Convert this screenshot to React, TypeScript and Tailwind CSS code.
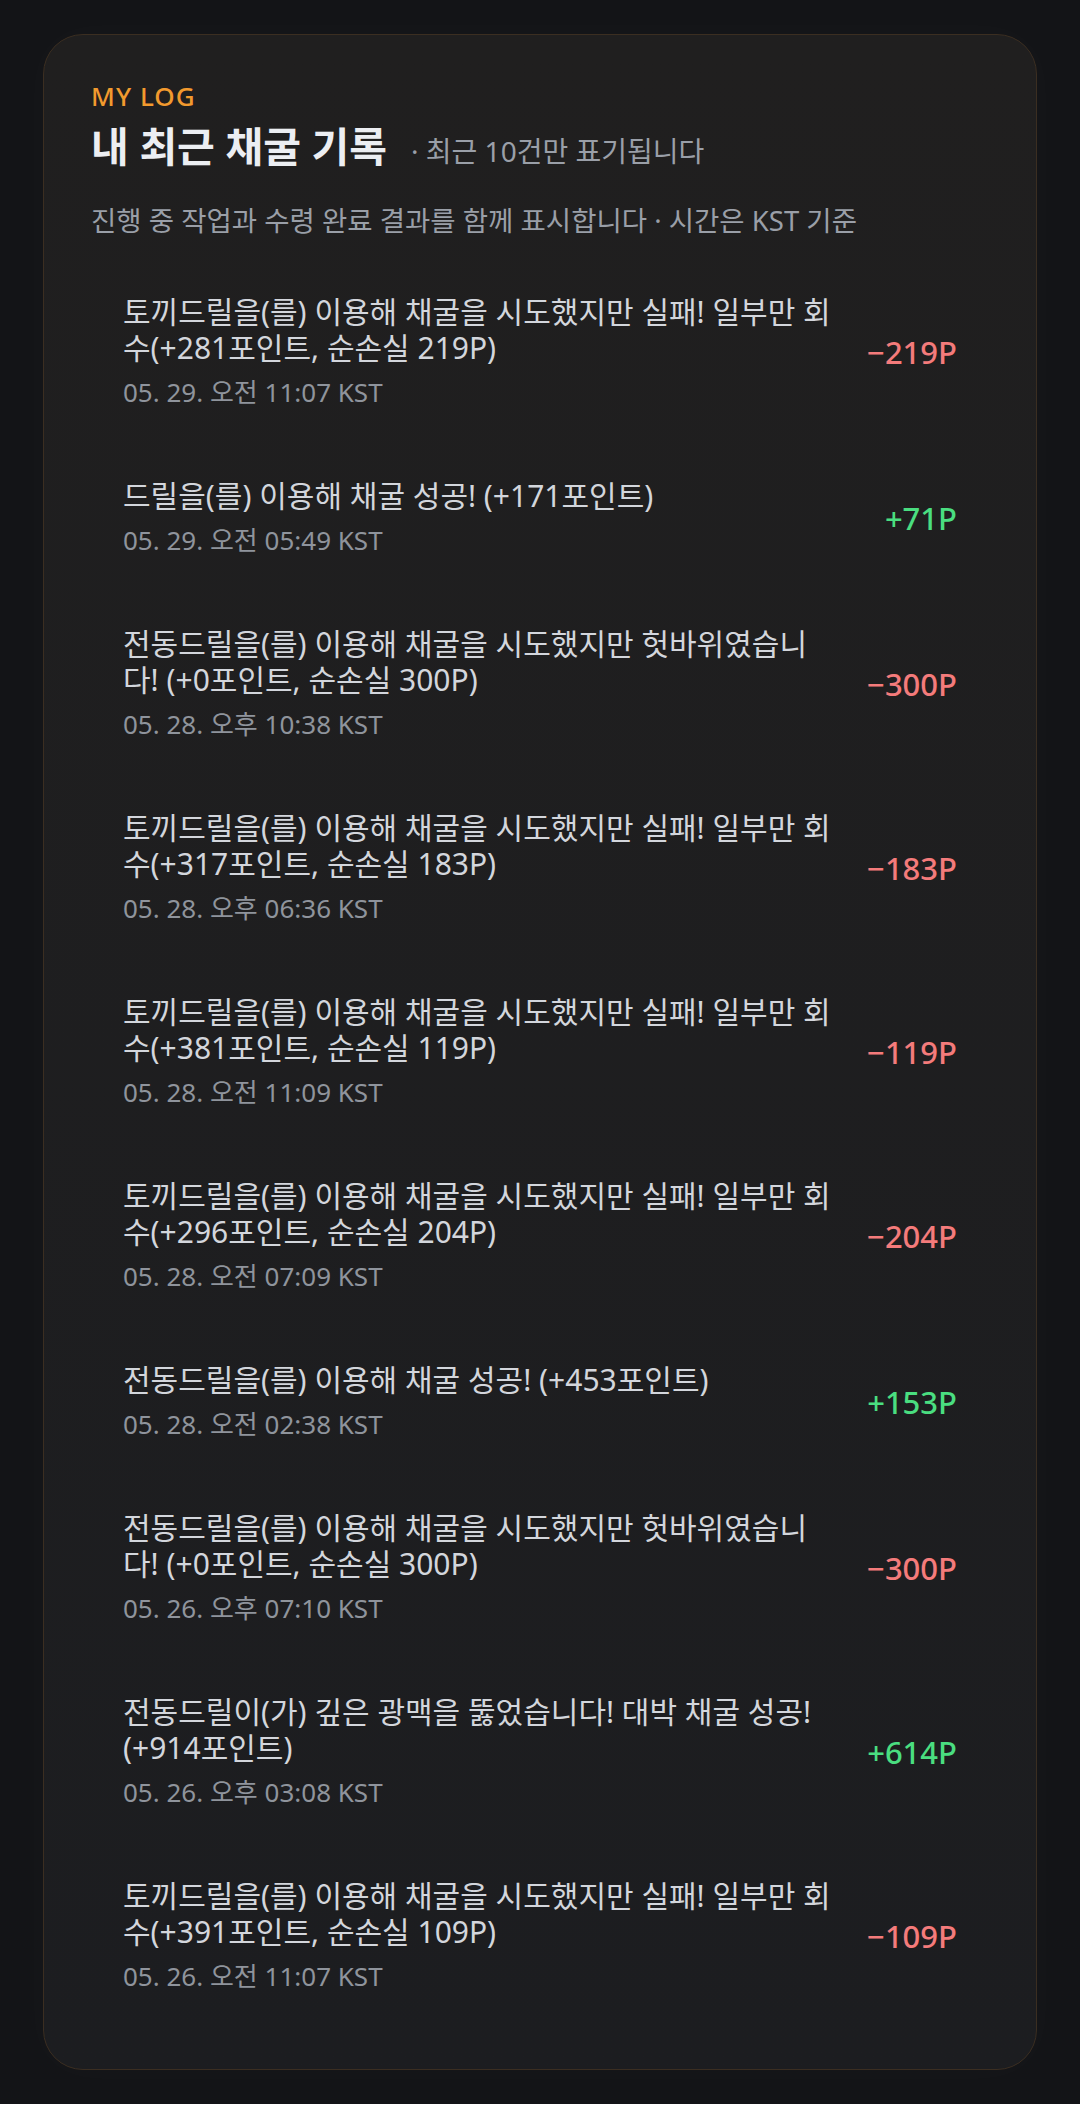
import React from "react";

interface LogEntry {
  message: string;
  time: string;
  delta: number;
}

const entries: LogEntry[] = [
  { message: "토끼드릴을(를) 이용해 채굴을 시도했지만 실패! 일부만 회수(+281포인트, 순손실 219P)", time: "05. 29. 오전 11:07 KST", delta: -219 },
  { message: "드릴을(를) 이용해 채굴 성공! (+171포인트)", time: "05. 29. 오전 05:49 KST", delta: 71 },
  { message: "전동드릴을(를) 이용해 채굴을 시도했지만 헛바위였습니다! (+0포인트, 순손실 300P)", time: "05. 28. 오후 10:38 KST", delta: -300 },
  { message: "토끼드릴을(를) 이용해 채굴을 시도했지만 실패! 일부만 회수(+317포인트, 순손실 183P)", time: "05. 28. 오후 06:36 KST", delta: -183 },
  { message: "토끼드릴을(를) 이용해 채굴을 시도했지만 실패! 일부만 회수(+381포인트, 순손실 119P)", time: "05. 28. 오전 11:09 KST", delta: -119 },
  { message: "토끼드릴을(를) 이용해 채굴을 시도했지만 실패! 일부만 회수(+296포인트, 순손실 204P)", time: "05. 28. 오전 07:09 KST", delta: -204 },
  { message: "전동드릴을(를) 이용해 채굴 성공! (+453포인트)", time: "05. 28. 오전 02:38 KST", delta: 153 },
  { message: "전동드릴을(를) 이용해 채굴을 시도했지만 헛바위였습니다! (+0포인트, 순손실 300P)", time: "05. 26. 오후 07:10 KST", delta: -300 },
  { message: "전동드릴이(가) 깊은 광맥을 뚫었습니다! 대박 채굴 성공! (+914포인트)", time: "05. 26. 오후 03:08 KST", delta: 614 },
  { message: "토끼드릴을(를) 이용해 채굴을 시도했지만 실패! 일부만 회수(+391포인트, 순손실 109P)", time: "05. 26. 오전 11:07 KST", delta: -109 },
];

const LogRow = ({ entry }: { entry: LogEntry }) => {
  const positive = entry.delta > 0;
  return (
    <li className="flex items-center gap-[30px] px-8 py-7">
      <div className="flex-1 min-w-0">
        <p className="text-[30px] leading-[36px] text-[#d3d6dc]">{entry.message}</p>
        <p className="mt-2 text-[26px] leading-[36px] text-[#8f949c]">{entry.time}</p>
      </div>
      <span
        className={
          positive
            ? "shrink-0 text-[31px] leading-[40px] font-medium text-[#4ade80]"
            : "shrink-0 text-[31px] leading-[40px] font-medium text-[#f47b7b]"
        }
      >
        {positive ? `+${entry.delta}P` : `−${Math.abs(entry.delta)}P`}
      </span>
    </li>
  );
};

export default function App() {
  return (
    <div
      className="min-h-[2104px] bg-[#131417] px-[43px] pt-[34px] pb-[37px]"
      style={{ fontFamily: '"Noto Sans", "Noto Sans CJK KR", sans-serif' }}
    >
      <section className="rounded-[40px] border border-[#3b2e21] bg-gradient-to-b from-[#201f1f] to-[#1c1d20] px-[47px] pt-[47px] pb-[47px] shadow-[0_0_40px_rgba(255,255,255,0.025)]">
        <header>
          <p className="text-[26px] leading-[28px] font-medium tracking-[0.04em] text-[#f29a2e]">MY LOG</p>
          <div className="mt-[11px] flex items-baseline gap-6">
            <h2 className="text-[41px] leading-[50px] font-bold text-[#eceef2]">내 최근 채굴 기록</h2>
            <span className="text-[28px] text-[#9a9fa8]">· 최근 10건만 표기됩니다</span>
          </div>
          <p className="mt-[31px] text-[27.5px] leading-[36px] text-[#9a9fa8]">
            진행 중 작업과 수령 완료 결과를 함께 표시합니다 · 시간은 KST 기준
          </p>
        </header>
        <ul className="mt-[27px] flex flex-col gap-3">
          {entries.map((entry, index) => (
            <LogRow key={index} entry={entry} />
          ))}
        </ul>
      </section>
    </div>
  );
}
